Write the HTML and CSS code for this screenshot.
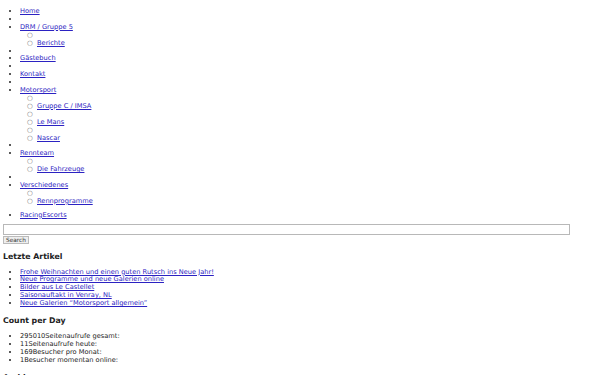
FILE: index.html
```html
<!DOCTYPE html>
<html lang="de">
<head>
    <meta charset="UTF-8">
    <title>Racing</title>
    <link rel="stylesheet" href="styles.css">
</head>
<body>

    <!-- Main menu -->
    <ul class="menu">
        <li><a href="#">Home</a></li>
        <li></li>
        <li><a href="#">DRM / Gruppe 5</a>
            <ul>
                <li></li>
                <li><a href="#">Berichte</a></li>
            </ul>
        </li>
        <li></li>
        <li><a href="#">Gästebuch</a></li>
        <li></li>
        <li><a href="#">Kontakt</a></li>
        <li></li>
        <li><a href="#">Motorsport</a>
            <ul>
                <li></li>
                <li><a href="#">Gruppe C / IMSA</a></li>
                <li></li>
                <li><a href="#">Le Mans</a></li>
                <li></li>
                <li><a href="#">Nascar</a></li>
            </ul>
        </li>
        <li></li>
        <li><a href="#">Rennteam</a>
            <ul>
                <li></li>
                <li><a href="#">Die Fahrzeuge</a></li>
            </ul>
        </li>
        <li></li>
        <li><a href="#">Verschiedenes</a>
            <ul class="last-sub">
                <li></li>
                <li><a href="#">Rennprogramme</a></li>
            </ul>
        </li>
        <li><a href="#">RacingEscorts</a></li>
    </ul>

    <!-- Search -->
    <form class="search">
        <input type="text" class="search-field">
        <button type="submit" class="search-button">Search</button>
    </form>

    <!-- Sidebar widgets -->
    <h2>Letzte Artikel</h2>
    <ul class="widget">
        <li><a href="#">Frohe Weihnachten und einen guten Rutsch ins Neue Jahr!</a></li>
        <li><a href="#">Neue Programme und neue Galerien online</a></li>
        <li><a href="#">Bilder aus Le Castellet</a></li>
        <li><a href="#">Saisonauftakt in Venray, NL</a></li>
        <li><a href="#">Neue Galerien “Motorsport allgemein”</a></li>
    </ul>

    <h2>Count per Day</h2>
    <ul class="widget">
        <li>295010Seitenaufrufe gesamt:</li>
        <li>11Seitenaufrufe heute:</li>
        <li>169Besucher pro Monat:</li>
        <li>1Besucher momentan online:</li>
    </ul>

    <h2>Archive</h2>

</body>
</html>
```

FILE: styles.css
```css
/* General */
body {
    font-family: "DejaVu Sans", sans-serif;
    font-size: 6.65px;
    line-height: 7.9px;
    color: #222;
    margin: 3px;
}

a {
    color: #2b22c2;
}

ul {
    margin: 5px 0 0;
    padding-left: 17px;
}

ul ul {
    margin: 0;
    list-style-type: "○  ";
}

ul ul li::marker {
    color: #777;
}

.last-sub {
    margin-bottom: 6px;
}

/* Search */
.search {
    margin: 4px 0 0;
}

.search-field {
    display: block;
    width: 567px;
    height: 11px;
    box-sizing: border-box;
    margin: 0;
    padding: 0;
    border: 1px solid #b8b8b8;
}

.search-button {
    display: block;
    font-family: "DejaVu Sans", sans-serif;
    font-size: 5.8px;
    height: 8px;
    line-height: 6px;
    padding: 0 2px;
    margin: 1px 0 0;
    border: 1px solid #bbb;
    background: #eee;
    color: #333;
}

/* Widgets */
h2 {
    font-size: 7.8px;
    line-height: 9px;
    margin: 8px 0 8px;
}

.widget {
    margin: 0 0 6px;
}
```
